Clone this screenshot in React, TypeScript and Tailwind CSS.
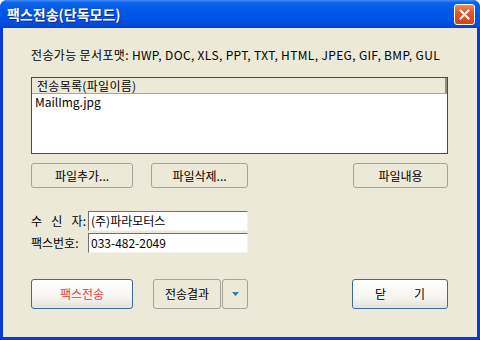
import React from "react";

const font = { fontFamily: '"Noto Sans CJK KR", "Noto Sans", sans-serif' };

function XpButton({
  children,
  className = "",
  primary = false,
}: {
  children: React.ReactNode;
  className?: string;
  primary?: boolean;
}) {
  return (
    <button
      className={`flex items-center justify-center rounded-[3px] border text-[12px] leading-none ${
        primary
          ? "border-[#3d6a99] bg-[linear-gradient(to_bottom,#ffffff_0%,#f6f5f1_60%,#e4e2da_100%)]"
          : "border-[#a5a398] bg-[#ece9d8]"
      } ${className}`}
    >
      {children}
    </button>
  );
}

export default function App() {
  return (
    <div className="w-[480px] h-[340px] bg-white" style={font}>
      <div className="w-full h-full flex flex-col rounded-t-[7px] overflow-hidden bg-[#0a3ad6]">
        {/* title bar */}
        <div className="h-[28px] flex items-center justify-between pl-[7px] pr-[5px] bg-[linear-gradient(to_bottom,#3f8cf3_0%,#0a62ec_10%,#0157e7_45%,#0050e0_80%,#0043cf_100%)]">
          <span className="text-white font-bold text-[14px] leading-none [text-shadow:1px_1px_0_#0a2a8a]">
            팩스전송(단독모드)
          </span>
          <div className="w-[21px] h-[21px] rounded-[3px] border border-white flex items-center justify-center bg-[linear-gradient(to_bottom,#ec8a66_0%,#e2562c_40%,#cf4418_100%)]">
            <svg width="11" height="11" viewBox="0 0 11 11">
              <path d="M1.5 1.5 L9.5 9.5 M9.5 1.5 L1.5 9.5" stroke="white" strokeWidth="2" strokeLinecap="square" />
            </svg>
          </div>
        </div>

        {/* body */}
        <div className="flex-1 mx-[3px] mb-[3px] bg-[#ece9d8] pl-[28px] pr-[29px] flex flex-col text-[12px] text-black">
          <div className="mt-[20px] h-[14px] leading-[14px] whitespace-nowrap tracking-[0.35px]">
            전송가능 문서포맷: HWP, DOC, XLS, PPT, TXT, HTML, JPEG, GIF, BMP, GUL
          </div>

          {/* file list */}
          <div className="mt-[15px] h-[77px] border border-[#4a4a4a] bg-white flex flex-col">
            <div className="h-[16px] bg-[#ece9d8] border-b border-[#aca899] border-r-2 border-r-[#8f8c80] pl-[5px] leading-[15px] tracking-[0.3px]">
              전송목록(파일이름)
            </div>
            <div className="pl-[3px] pt-[1px] leading-[14px]">MailImg.jpg</div>
          </div>

          {/* file buttons */}
          <div className="mt-[9px] h-[25px] flex">
            <XpButton className="w-[102px] h-full">파일추가...</XpButton>
            <XpButton className="w-[97px] h-full ml-[18px]">파일삭제...</XpButton>
            <XpButton className="w-[95px] h-full ml-auto">파일내용</XpButton>
          </div>

          {/* recipient fields */}
          <div className="mt-[23px] flex flex-col gap-[2px]">
            <div className="flex items-center h-[20px]">
              <div className="w-[55px] flex justify-between">
                <span>수</span>
                <span>신</span>
                <span>자:</span>
              </div>
              <div className="ml-[2px] w-[160px] h-[20px] bg-white border-t border-l border-t-[#6e6e6e] border-l-[#6e6e6e] border-b border-r border-b-[#f4f3ee] border-r-[#f4f3ee] pl-[2px] leading-[18px]">
                (주)파라모터스
              </div>
            </div>
            <div className="flex items-center h-[20px]">
              <div className="w-[55px]">팩스번호:</div>
              <div className="ml-[2px] w-[160px] h-[20px] bg-white border-t border-l border-t-[#6e6e6e] border-l-[#6e6e6e] border-b border-r border-b-[#f4f3ee] border-r-[#f4f3ee] pl-[2px] leading-[18px]">
                033-482-2049
              </div>
            </div>
          </div>

          {/* bottom buttons */}
          <div className="mt-[26px] h-[30px] flex">
            <XpButton primary className="w-[102px] h-full text-[#e83a3a]">
              팩스전송
            </XpButton>
            <XpButton className="w-[68px] h-full ml-[20px]">전송결과</XpButton>
            <XpButton className="w-[26px] h-full ml-[1px]">
              <svg width="7" height="4" viewBox="0 0 7 4">
                <defs>
                  <linearGradient id="arr" x1="0" y1="0" x2="0" y2="1">
                    <stop offset="0" stopColor="#12a0a0" />
                    <stop offset="1" stopColor="#9a22c8" />
                  </linearGradient>
                </defs>
                <path d="M0 0 H7 L3.5 4 Z" fill="url(#arr)" />
              </svg>
            </XpButton>
            <XpButton primary className="w-[96px] h-full ml-auto gap-[28px]">
              <span>닫</span>
              <span>기</span>
            </XpButton>
          </div>
        </div>
      </div>
    </div>
  );
}
